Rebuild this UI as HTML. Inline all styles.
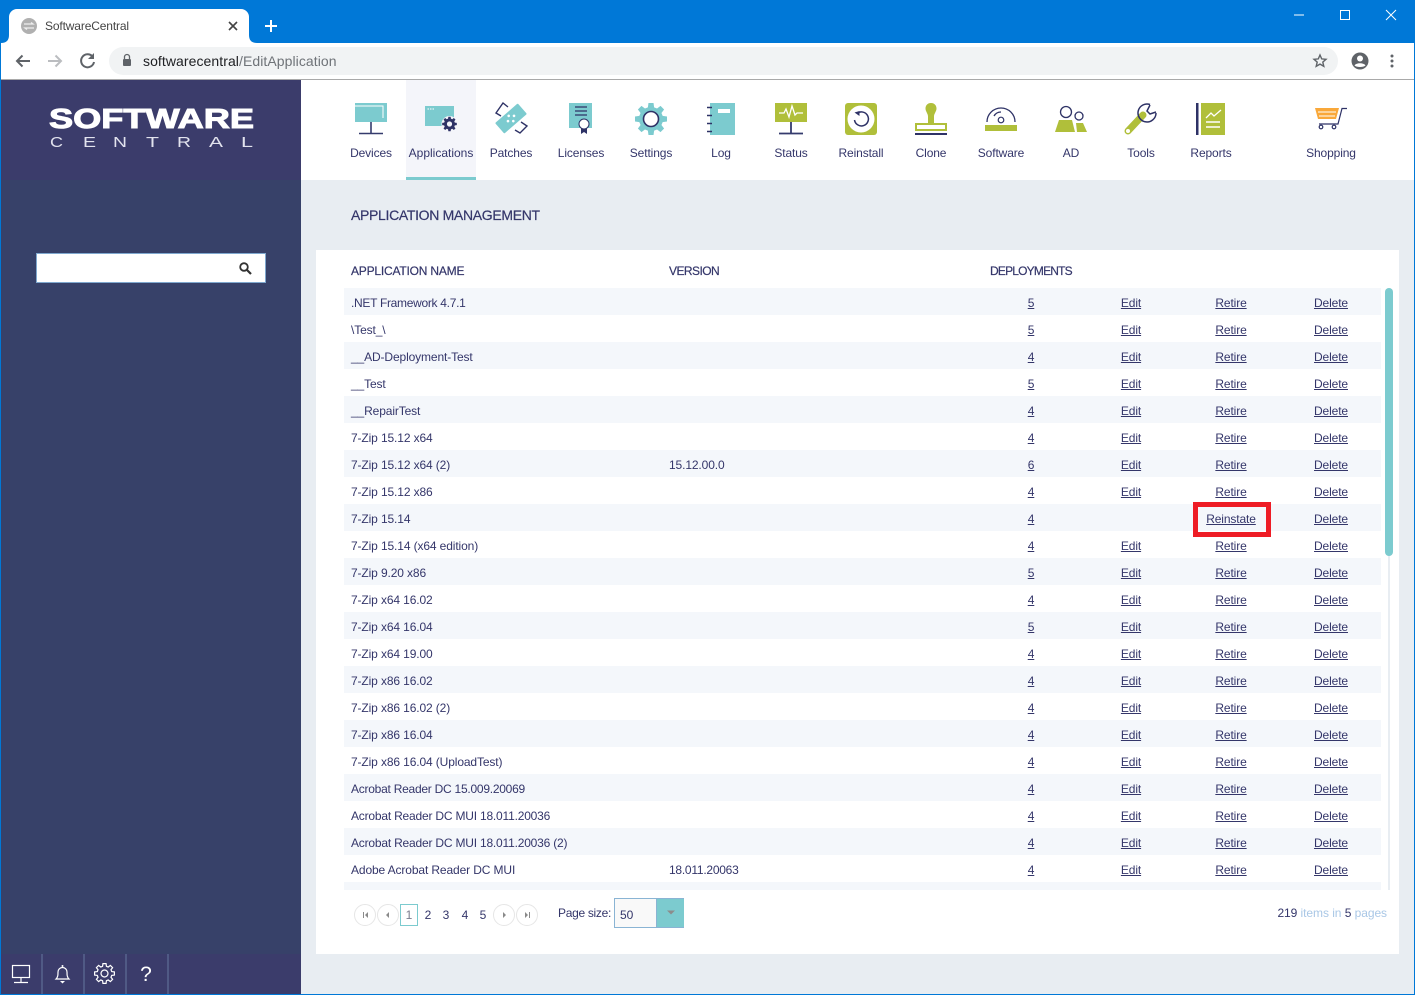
<!DOCTYPE html>
<html><head><meta charset="utf-8"><title>SoftwareCentral</title>
<style>
html,body{margin:0;padding:0;width:1415px;height:995px;overflow:hidden;background:#e8edf2;font-family:"Liberation Sans",sans-serif;font-size:12px;color:#34366a}
.a{position:absolute;white-space:nowrap}
#frame{position:absolute;left:0;top:0;width:1413px;height:993px;border:1px solid #0078d7;z-index:9;pointer-events:none}
#title{position:absolute;left:0;top:0;width:1415px;height:43px;background:#0078d7}
#tab{position:absolute;left:9px;top:9px;width:240px;height:34px;background:#fff;border-radius:8px 8px 0 0}
#bar{position:absolute;left:0;top:43px;width:1415px;height:36px;background:#fff;border-bottom:1px solid #a9a9a9}
#url{position:absolute;left:109px;top:47px;width:1229px;height:28px;background:#f1f3f4;border-radius:14px}
#side{position:absolute;left:0;top:80px;width:301px;height:915px;background:#374169}
#sidetop{position:absolute;left:0;top:80px;width:301px;height:100px;background:#3b3c6b}
#sidebot{position:absolute;left:0;top:954px;width:301px;height:41px;background:#3b3c6b}
.sep{position:absolute;top:954px;width:2px;height:41px;background:#505a85}
#top{position:absolute;left:301px;top:80px;width:1114px;height:100px;background:#fff}
#sel{position:absolute;left:406px;top:80px;width:70px;height:97px;background:#f4f5fa;border-bottom:3px solid #7ccbcf}
.l{position:absolute;top:146px;width:90px;text-align:center;line-height:14px;font-size:12px;letter-spacing:-.12px}
#search{position:absolute;left:36px;top:253px;width:228px;height:28px;background:#fff;border:1px solid #7fa8cf}
#panel{position:absolute;left:316px;top:250px;width:1083px;height:704px;background:#fff}
#h1{position:absolute;left:351px;top:207px;font-size:14px;line-height:16px;letter-spacing:-.32px;-webkit-text-stroke:.2px #34366a;white-space:nowrap}
.h{position:absolute;top:264px;line-height:14px;font-size:12px;-webkit-text-stroke:.2px #34366a;white-space:nowrap}
#rows{position:absolute;left:344px;top:288px;width:1037px;height:602px;overflow:hidden;letter-spacing:-.12px}
.r{position:relative;height:27px;line-height:31px}
.r:nth-child(odd){background:#f4f7fb}
.r span,.r u{position:absolute;top:0;white-space:nowrap;height:27px;overflow:visible}
.n{left:7px}.v{left:325px}
.r u{width:80px;text-align:center;text-decoration:none}
.r u b{font-weight:normal;text-decoration:underline}
.d{left:647px}.e{left:747px}.t{left:847px}.x{left:947px}
#track{position:absolute;left:1388px;top:288px;width:2px;height:602px;background:#e8edf2}
#thumb{position:absolute;left:1385px;top:288px;width:8px;height:268px;background:#7ccbcf;border-radius:4px}
#red{position:absolute;left:1193px;top:502px;width:68px;height:25px;border:5px solid #ee1c25}
#cur{position:absolute;left:400px;top:904px;width:16px;height:20px;border:1px solid #7ccbcf;text-align:center;line-height:21px;color:#7a7a8c}
.p{position:absolute;top:905px;line-height:21px;width:18px;text-align:center}
#dd{position:absolute;left:614px;top:898px;width:68px;height:28px;border:1px solid #8ab4d4;background:#f9f9f9}
#ddb{position:absolute;left:656px;top:899px;width:27px;height:28px;background:#7ccbcf;border-left:1px solid #8ab4d4}
#svg{position:absolute;left:0;top:0}
</style></head><body>
<div id="title"></div><div id="tab"></div>
<div id="bar"></div><div id="url"></div>
<div class="a" style="left:45px;top:19px;color:#444;line-height:14px;letter-spacing:-.14px">SoftwareCentral</div>
<div class="a" style="left:143px;top:53px;font-size:14px;line-height:16px;color:#202124;letter-spacing:.07px">softwarecentral<span style="color:#6f7378">/EditApplication</span></div>
<div id="side"></div><div id="sidetop"></div><div id="sidebot"></div>
<div class="sep" style="left:41px"></div><div class="sep" style="left:83px"></div><div class="sep" style="left:125px"></div><div class="sep" style="left:167px"></div>
<div id="top"></div><div id="sel"></div>
<div id="search"></div>
<div class="l" style="left:326px">Devices</div><div class="l" style="left:396px;letter-spacing:0">Applications</div><div class="l" style="left:466px">Patches</div><div class="l" style="left:536px">Licenses</div><div class="l" style="left:606px">Settings</div><div class="l" style="left:676px">Log</div><div class="l" style="left:746px">Status</div><div class="l" style="left:816px">Reinstall</div><div class="l" style="left:886px">Clone</div><div class="l" style="left:956px">Software</div><div class="l" style="left:1026px">AD</div><div class="l" style="left:1096px">Tools</div><div class="l" style="left:1166px">Reports</div><div class="l" style="left:1286px">Shopping</div>
<div id="h1">APPLICATION MANAGEMENT</div>
<div id="panel"></div>
<div class="h" style="left:351px;letter-spacing:-.2px">APPLICATION NAME</div><div class="h" style="left:669px;letter-spacing:-.55px">VERSION</div><div class="h" style="left:990px;letter-spacing:-.8px">DEPLOYMENTS</div>
<div id="rows">
<div class="r"><span class="n" style="letter-spacing:-.3px">.NET Framework 4.7.1</span><u class="d"><b>5</b></u><u class="e"><b>Edit</b></u><u class="t"><b>Retire</b></u><u class="x"><b>Delete</b></u></div>
<div class="r"><span class="n">\Test_\</span><u class="d"><b>5</b></u><u class="e"><b>Edit</b></u><u class="t"><b>Retire</b></u><u class="x"><b>Delete</b></u></div>
<div class="r"><span class="n">__AD-Deployment-Test</span><u class="d"><b>4</b></u><u class="e"><b>Edit</b></u><u class="t"><b>Retire</b></u><u class="x"><b>Delete</b></u></div>
<div class="r"><span class="n">__Test</span><u class="d"><b>5</b></u><u class="e"><b>Edit</b></u><u class="t"><b>Retire</b></u><u class="x"><b>Delete</b></u></div>
<div class="r"><span class="n">__RepairTest</span><u class="d"><b>4</b></u><u class="e"><b>Edit</b></u><u class="t"><b>Retire</b></u><u class="x"><b>Delete</b></u></div>
<div class="r"><span class="n">7-Zip 15.12 x64</span><u class="d"><b>4</b></u><u class="e"><b>Edit</b></u><u class="t"><b>Retire</b></u><u class="x"><b>Delete</b></u></div>
<div class="r"><span class="n">7-Zip 15.12 x64 (2)</span><span class="v">15.12.00.0</span><u class="d"><b>6</b></u><u class="e"><b>Edit</b></u><u class="t"><b>Retire</b></u><u class="x"><b>Delete</b></u></div>
<div class="r"><span class="n">7-Zip 15.12 x86</span><u class="d"><b>4</b></u><u class="e"><b>Edit</b></u><u class="t"><b>Retire</b></u><u class="x"><b>Delete</b></u></div>
<div class="r"><span class="n">7-Zip 15.14</span><u class="d"><b>4</b></u><u class="t"><b>Reinstate</b></u><u class="x"><b>Delete</b></u></div>
<div class="r"><span class="n">7-Zip 15.14 (x64 edition)</span><u class="d"><b>4</b></u><u class="e"><b>Edit</b></u><u class="t"><b>Retire</b></u><u class="x"><b>Delete</b></u></div>
<div class="r"><span class="n">7-Zip 9.20 x86</span><u class="d"><b>5</b></u><u class="e"><b>Edit</b></u><u class="t"><b>Retire</b></u><u class="x"><b>Delete</b></u></div>
<div class="r"><span class="n">7-Zip x64 16.02</span><u class="d"><b>4</b></u><u class="e"><b>Edit</b></u><u class="t"><b>Retire</b></u><u class="x"><b>Delete</b></u></div>
<div class="r"><span class="n">7-Zip x64 16.04</span><u class="d"><b>5</b></u><u class="e"><b>Edit</b></u><u class="t"><b>Retire</b></u><u class="x"><b>Delete</b></u></div>
<div class="r"><span class="n">7-Zip x64 19.00</span><u class="d"><b>4</b></u><u class="e"><b>Edit</b></u><u class="t"><b>Retire</b></u><u class="x"><b>Delete</b></u></div>
<div class="r"><span class="n">7-Zip x86 16.02</span><u class="d"><b>4</b></u><u class="e"><b>Edit</b></u><u class="t"><b>Retire</b></u><u class="x"><b>Delete</b></u></div>
<div class="r"><span class="n">7-Zip x86 16.02 (2)</span><u class="d"><b>4</b></u><u class="e"><b>Edit</b></u><u class="t"><b>Retire</b></u><u class="x"><b>Delete</b></u></div>
<div class="r"><span class="n">7-Zip x86 16.04</span><u class="d"><b>4</b></u><u class="e"><b>Edit</b></u><u class="t"><b>Retire</b></u><u class="x"><b>Delete</b></u></div>
<div class="r"><span class="n">7-Zip x86 16.04 (UploadTest)</span><u class="d"><b>4</b></u><u class="e"><b>Edit</b></u><u class="t"><b>Retire</b></u><u class="x"><b>Delete</b></u></div>
<div class="r"><span class="n" style="letter-spacing:-.25px">Acrobat Reader DC 15.009.20069</span><u class="d"><b>4</b></u><u class="e"><b>Edit</b></u><u class="t"><b>Retire</b></u><u class="x"><b>Delete</b></u></div>
<div class="r"><span class="n" style="letter-spacing:-.2px">Acrobat Reader DC MUI 18.011.20036</span><u class="d"><b>4</b></u><u class="e"><b>Edit</b></u><u class="t"><b>Retire</b></u><u class="x"><b>Delete</b></u></div>
<div class="r"><span class="n" style="letter-spacing:-.2px">Acrobat Reader DC MUI 18.011.20036 (2)</span><u class="d"><b>4</b></u><u class="e"><b>Edit</b></u><u class="t"><b>Retire</b></u><u class="x"><b>Delete</b></u></div>
<div class="r"><span class="n">Adobe Acrobat Reader DC MUI</span><span class="v" style="letter-spacing:-.25px">18.011.20063</span><u class="d"><b>4</b></u><u class="e"><b>Edit</b></u><u class="t"><b>Retire</b></u><u class="x"><b>Delete</b></u></div>
<div class="r"></div>
</div>
<div id="track"></div><div id="thumb"></div>
<div id="red"></div>
<div id="cur">1</div>
<div class="p" style="left:419px">2</div><div class="p" style="left:437px">3</div><div class="p" style="left:456px">4</div><div class="p" style="left:474px">5</div>
<div class="a" style="left:558px;top:906px;line-height:14px;letter-spacing:-.3px">Page size:</div>
<div id="dd"></div><div id="ddb"></div>
<div class="a" style="left:620px;top:908px;line-height:14px">50</div>
<div class="a" style="right:28px;top:906px;line-height:14px;color:#a9c7e6;letter-spacing:-.06px"><span style="color:#34366a">219</span> items in <span style="color:#34366a">5</span> pages</div>

<svg id="svg" width="1415" height="995" viewBox="0 0 1415 995" xmlns="http://www.w3.org/2000/svg">
<defs><polygon id="gear" points="7.2,-1.93 9.88,-1.56 9.88,1.56 7.2,1.93 6.46,3.73 8.09,5.88 5.88,8.09 3.73,6.46 1.93,7.2 1.56,9.88 -1.56,9.88 -1.93,7.2 -3.73,6.46 -5.88,8.09 -8.09,5.88 -6.46,3.73 -7.2,1.93 -9.88,1.56 -9.88,-1.56 -7.2,-1.93 -6.46,-3.73 -8.09,-5.88 -5.88,-8.09 -3.73,-6.46 -1.93,-7.2 -1.56,-9.88 1.56,-9.88 1.93,-7.2 3.73,-6.46 5.88,-8.09 8.09,-5.88 6.46,-3.73"/></defs>
<!-- tab corners -->
<path d="M1 43 Q9 43 9 35 V43Z M249 35 Q249 43 257 43 H249Z" fill="#fff"/>
<!-- favicon -->
<circle cx="29" cy="26" r="8" fill="#b0b0b0"/><path d="M24 24h9l-2-1.500M34 28h-9l2 1.500" fill="none" stroke="#eee" stroke-width="1.300"/>
<path d="M229 22l8 8M237 22l-8 8" stroke="#444" stroke-width="1.600"/>
<path d="M271 20v12M265 26h12" stroke="#fff" stroke-width="2"/>
<!-- win controls -->
<path d="M1294 15h10" stroke="#fff"/><rect x="1340.500" y="10.500" width="9" height="9" fill="none" stroke="#fff"/><path d="M1386 10l10 10M1396 10l-10 10" stroke="#fff"/>
<!-- nav -->
<path d="M30 61H17M22.500 55.500L17 61l5.500 5.500" fill="none" stroke="#5f6368" stroke-width="2"/>
<path d="M48 61h13M55.500 55.500L61 61l-5.500 5.500" fill="none" stroke="#bbbdc0" stroke-width="2"/>
<path d="M92.500 56.500A6.500 6.500 0 1 0 94 62" fill="none" stroke="#5f6368" stroke-width="2"/><path d="M94 53v6h-6z" fill="#5f6368"/>
<rect x="123" y="59" width="8" height="7" rx="1" fill="#5f6368"/><path d="M124.500 59v-2a2.500 2.500 0 0 1 5 0v2" fill="none" stroke="#5f6368" stroke-width="1.300"/>
<path d="M1320 55l1.700 3.900 4.300.4-3.200 2.800 1 4.200-3.800-2.200-3.800 2.200 1-4.200-3.200-2.800 4.300-.4z" fill="none" stroke="#5f6368" stroke-width="1.400"/>
<circle cx="1360" cy="61" r="8.500" fill="#5f6368"/><circle cx="1360" cy="58.500" r="3" fill="#fff"/><path d="M1354.500 65.500c1.500-3 9.500-3 11 0c-2 2-9 2-11 0z" fill="#fff"/>
<circle cx="1392" cy="56" r="1.500" fill="#5f6368"/><circle cx="1392" cy="61" r="1.500" fill="#5f6368"/><circle cx="1392" cy="66" r="1.500" fill="#5f6368"/>
<!-- logo -->
<text x="49" y="128" font-family="Liberation Sans" font-weight="bold" font-size="28" fill="#fff" stroke="#fff" stroke-width="1" textLength="205" lengthAdjust="spacingAndGlyphs">SOFTWARE</text>
<g font-family="Liberation Sans" font-size="15" fill="#e2e3ee" lengthAdjust="spacingAndGlyphs">
<text x="50" y="147" textLength="13" lengthAdjust="spacingAndGlyphs">C</text><text x="83" y="147" textLength="13" lengthAdjust="spacingAndGlyphs">E</text><text x="113" y="147" textLength="14" lengthAdjust="spacingAndGlyphs">N</text><text x="146" y="147" textLength="13" lengthAdjust="spacingAndGlyphs">T</text><text x="177" y="147" textLength="14" lengthAdjust="spacingAndGlyphs">R</text><text x="209" y="147" textLength="14" lengthAdjust="spacingAndGlyphs">A</text><text x="241" y="147" textLength="12" lengthAdjust="spacingAndGlyphs">L</text></g>
<!-- search -->
<circle cx="244" cy="267" r="3.800" fill="none" stroke="#333" stroke-width="1.800"/><path d="M247 270l4 4" stroke="#333" stroke-width="2.200"/>
<!-- Devices -->
<rect x="355" y="103" width="32" height="19" fill="#7ccbcf"/><path d="M355 106h28v12" fill="none" stroke="#fff" stroke-width="1"/><path d="M371 122v11M359 133.500h24" stroke="#353b6d" stroke-width="1.600"/>
<!-- Applications -->
<rect x="425" y="106" width="29" height="20" fill="#7ccbcf"/><path d="M427.500 109h1.500m1 0h1.500m1 0h1.500" stroke="#fff"/>
<circle cx="449.500" cy="124" r="8" fill="#f4f5fa"/><use href="#gear" transform="translate(449.500 124) scale(.74)" fill="#2e3266"/><circle cx="449.500" cy="124" r="2.600" fill="#f4f5fa"/>
<!-- Patches -->
<g transform="rotate(-41 511 118.500)"><rect x="496" y="111.500" width="30" height="14" rx="1" fill="#7ccbcf"/><circle cx="507" cy="118.500" r="1.300" fill="#fff"/><circle cx="511" cy="115" r="1.300" fill="#fff"/><circle cx="511" cy="122" r="1.300" fill="#fff"/><circle cx="515" cy="118.500" r="1.300" fill="#fff"/></g>
<path d="M508 107l-5-4-7 10 5 3M521 122l6 4-7 7-5-3" fill="none" stroke="#2e3266" stroke-width="1.400"/>
<!-- Licenses -->
<rect x="569" y="103" width="23" height="25" fill="#7ccbcf"/><path d="M575 107h12M575 111h12M575 115h12" stroke="#2e3266" stroke-width="1.200"/>
<path d="M581 126v8l3-2 3 2v-8z" fill="#2e3266"/><circle cx="584" cy="124" r="5" fill="#fff" stroke="#2e3266" stroke-width="1"/>
<!-- Settings -->
<use href="#gear" transform="translate(651 119) scale(1.620)" fill="#7ccbcf"/><circle cx="651" cy="119" r="7.500" fill="#fff" stroke="#2e3266" stroke-width="1.600"/>
<!-- Log -->
<rect x="710" y="103" width="25" height="32" fill="#7ccbcf"/><rect x="718" y="109" width="12" height="4" fill="#fff"/><path d="M707 107.500h5M707 115.500h5M707 123.500h5M707 131.500h5" stroke="#2e3266" stroke-width="1.400"/>
<!-- Status -->
<rect x="775" y="103" width="32" height="19" fill="#b0bf3a"/><path d="M779 113h5l2-4 3 8 3-11 3 9 2-2h6" fill="none" stroke="#fff" stroke-width="1.300"/><path d="M791 122v11M779 133.500h24" stroke="#353b6d" stroke-width="1.800"/>
<!-- Reinstall -->
<rect x="845" y="103" width="32" height="32" rx="3" fill="#b0bf3a"/><circle cx="861" cy="119" r="13.500" fill="#fff"/><path d="M857 113.500A7 7 0 1 1 854.500 120" fill="none" stroke="#2e3266" stroke-width="1.500"/><path d="M854.500 112.500l5 -1.500v5z" fill="#2e3266"/>
<!-- Clone -->
<path d="M931 103c4 0 5.500 3 5.500 5.500 0 3-2.500 5-2.500 8v6.500h-6v-6.500c0-3-2.500-5-2.500-8 0-2.500 1.500-5.500 5.500-5.500z" fill="#b0bf3a"/><path d="M916 130v-6h30v6" fill="none" stroke="#b0bf3a" stroke-width="2"/><rect x="915" y="129" width="32" height="2" fill="#b0bf3a"/><rect x="915" y="133" width="32" height="2" fill="#2e3266"/>
<!-- Software -->
<rect x="985" y="125" width="32" height="6" fill="#b0bf3a"/><path d="M987 122a14 14 0 0 1 28 0" fill="none" stroke="#2e3266" stroke-width="1.300"/><path d="M994 116a8 8 0 0 1 7-4" fill="none" stroke="#2e3266" stroke-width="1.300"/><circle cx="1001" cy="120" r="2.800" fill="none" stroke="#2e3266" stroke-width="1.200"/>
<!-- AD -->
<circle cx="1066" cy="112" r="5.500" fill="none" stroke="#2e3266" stroke-width="1.300"/><circle cx="1079" cy="116" r="4" fill="none" stroke="#2e3266" stroke-width="1.300"/><path d="M1059 120h13l3 12h-20zM1076 123h7l4 9h-10z" fill="#b0bf3a"/>
<!-- Tools -->
<path d="M1128 131L1143 115" stroke="#b0bf3a" stroke-width="7" stroke-linecap="round"/><circle cx="1128" cy="131" r="2" fill="#fff"/><path d="M1150 104.500A9 9 0 1 0 1156 113" fill="none" stroke="#2e3266" stroke-width="1.500"/><path d="M1150 105l-3 6 3 3 6-2" fill="none" stroke="#2e3266" stroke-width="1.500"/>
<!-- Reports -->
<rect x="1196" y="103" width="2.500" height="32" fill="#2e3266"/><rect x="1201" y="103" width="24" height="32" fill="#b0bf3a"/><path d="M1206 118l5-5 3 3 7-6" fill="none" stroke="#fff" stroke-width="1.300"/><path d="M1206 122h14M1206 127h14" stroke="#fff" stroke-width="1.600"/>
<!-- Shopping -->
<path d="M1315 108h24l-3 11h-18z" fill="#f9a83a"/><path d="M1318 112h18M1319 116h16" stroke="#fff" stroke-width="1"/><path d="M1347 108.500h-5l-4 15.500h-19" fill="none" stroke="#2e3266" stroke-width="1.200"/><circle cx="1321" cy="127" r="1.800" fill="#fff" stroke="#2e3266" stroke-width="1.200"/><circle cx="1334" cy="127" r="1.800" fill="#fff" stroke="#2e3266" stroke-width="1.200"/>
<!-- bottom sidebar icons -->
<rect x="12.500" y="965.500" width="17" height="12" fill="none" stroke="#fff" stroke-width="1.200"/><path d="M21 978v4M14 982.500h14" stroke="#fff" stroke-width="1.200"/>
<path d="M56 979c2-2 2-4 2-7 0-2.500 2-4.500 4.500-4.500s4.500 2 4.500 4.500c0 3 0 5 2 7z" fill="none" stroke="#fff" stroke-width="1.200"/><circle cx="62.500" cy="966" r="1" fill="#fff"/><path d="M60 981h5l-2.500 2.500z" fill="#fff"/>
<use href="#gear" transform="translate(104.500 973.500)" fill="none" stroke="#fff" stroke-width="1.200"/><circle cx="104.500" cy="973.500" r="3.500" fill="none" stroke="#fff" stroke-width="1.200"/>
<text x="146" y="981" font-family="Liberation Sans" font-size="21" fill="#fff" text-anchor="middle">?</text>
<!-- pagination -->
<g fill="#fff" stroke="#e6e6e6" stroke-width="1"><circle cx="365" cy="915" r="10.500"/><circle cx="388" cy="915" r="10.500"/><circle cx="504" cy="915" r="10.500"/><circle cx="527" cy="915" r="10.500"/></g>
<path d="M368 912v6l-3-3zM386 915l3-3v6zM506 915l-3-3v6zM525 912v6l3-3z" fill="#8a8a8a"/>
<path d="M363.500 912v6M529.500 912v6" stroke="#8a8a8a" stroke-width="1"/>
<path d="M667 910.500h8l-4 4z" fill="#8c8c8c"/>
</svg>
<div id="frame"></div>
</body></html>
